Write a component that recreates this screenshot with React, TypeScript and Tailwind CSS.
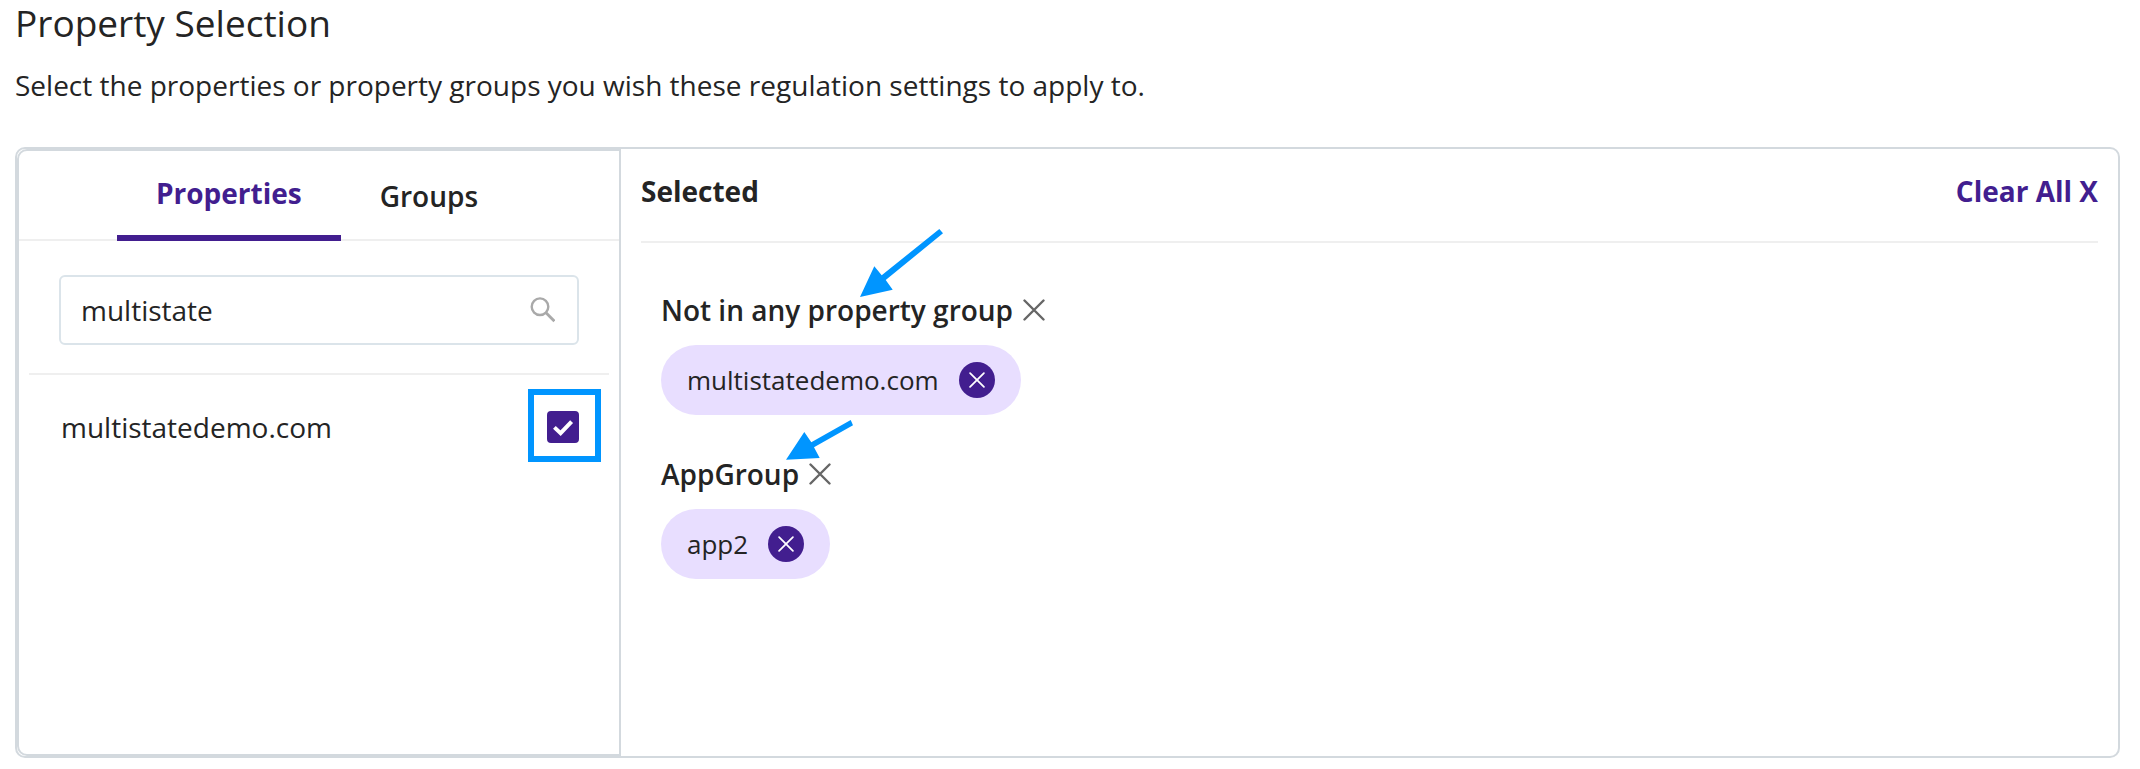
import React, { useState } from 'react';

interface SelectedGroup {
  name: string;
  items: string[];
  pointer: { className: string; viewBox: string; points: string };
}

const initialGroups: SelectedGroup[] = [
  {
    name: 'Not in any property group',
    items: ['multistatedemo.com'],
    pointer: {
      className: 'absolute left-[199px] -top-[61px] w-[83px] h-[68px] pointer-events-none',
      viewBox: '860 229 83 68',
      points: '860,297 874.3,266.3 881.7,275.3 939.3,229 943,233.3 885.7,280 892.7,289.7',
    },
  },
  {
    name: 'AppGroup',
    items: ['app2'],
    pointer: {
      className: 'absolute left-[125px] -top-[34px] w-[67px] h-[40px] pointer-events-none',
      viewBox: '786 420 67 40',
      points: '786,459.7 804.3,432 811.3,442.3 850.7,420 853,425.3 814,447.3 819.7,458',
    },
  },
];

const CrossIcon: React.FC<{ className: string }> = ({ className }) => (
  <svg className={className} viewBox="0 0 22 22" fill="none" stroke="currentColor" strokeWidth="2.4" strokeLinecap="round" aria-hidden="true">
    <path d="M1.5 1.5L20.5 20.5M20.5 1.5L1.5 20.5" />
  </svg>
);

const Chip: React.FC<{ label: string; onRemove: () => void }> = ({ label, onRemove }) => (
  <div className="flex items-center gap-5 h-[70px] px-[26px] rounded-full bg-[#e8deff] text-[26px]">
    <span>{label}</span>
    <button
      type="button"
      aria-label={`Remove ${label}`}
      onClick={onRemove}
      className="flex items-center justify-center size-9 rounded-full bg-[#421e8f] text-white"
    >
      <CrossIcon className="size-4" />
    </button>
  </div>
);

const App: React.FC = () => {
  const [tab, setTab] = useState('Properties');
  const [query, setQuery] = useState('multistate');
  const [checked, setChecked] = useState(true);
  const [groups, setGroups] = useState(initialGroups);

  const removeGroup = (name: string) => setGroups(groups.filter((g) => g.name !== name));

  return (
    <main className="min-h-screen flex flex-col pl-[15px] pr-5 pb-[11px] bg-white text-[#242424] text-[28px] font-['Open_Sans',sans-serif]">
      <h1 className="text-[37px] leading-[46px] font-medium">Property Selection</h1>
      <p className="mt-5 leading-[38px]">
        Select the properties or property groups you wish these regulation settings to apply to.
      </p>

      <div className="flex flex-1 mt-[43px] border-2 border-[#d3d9de] rounded-[10px]">
        {/* Search and pick */}
        <section className="w-[604px] shrink-0 border-2 border-[#d3d9de] rounded-l-[10px]">
          <div className="relative flex justify-center h-[90px] pr-1" role="tablist">
            <div className="absolute inset-x-0 bottom-0 h-[2px] bg-[#efefef]"></div>
            {['Properties', 'Groups'].map((name) => (
              <button
                key={name}
                type="button"
                role="tab"
                aria-selected={tab === name}
                onClick={() => setTab(name)}
                className={
                  tab === name
                    ? 'relative px-[39px] font-bold text-[#421e8f] border-b-6 border-[#421e8f]'
                    : 'relative px-[39px] font-semibold'
                }
              >
                {name}
              </button>
            ))}
          </div>

          <div className="mx-[10px] px-[30px] pt-[34px] pb-7 border-b-2 border-[#efefef]">
            <div className="flex items-center h-[70px] pl-5 pr-[22px] border-2 border-[#dbe4ea] rounded-md">
              <input
                type="text"
                aria-label="Search properties"
                value={query}
                onChange={(e) => setQuery(e.target.value)}
                className="flex-1 min-w-0 outline-none"
              />
              <svg className="size-[26px] text-[#a9a9a9]" viewBox="0 0 26 26" fill="none" stroke="currentColor" strokeWidth="2.4" aria-hidden="true">
                <circle cx="11" cy="9.7" r="8.3" />
                <path d="M17 15.8L25.4 24.2" strokeWidth="2.8" />
              </svg>
            </div>
          </div>

          <div className="flex items-center justify-between h-[104px] px-10">
            <label htmlFor="multistatedemo" className="pl-[2px]">multistatedemo.com</label>
            <div className="relative size-8">
              <input
                id="multistatedemo"
                type="checkbox"
                checked={checked}
                onChange={(e) => setChecked(e.target.checked)}
                className="peer block appearance-none size-8 rounded-[4px] border-2 border-[#421e8f] checked:bg-[#421e8f]"
              />
              <svg className="absolute inset-0 size-8 hidden peer-checked:block pointer-events-none" viewBox="0 0 32 32" fill="none" stroke="white" strokeWidth="4" aria-hidden="true">
                <path d="M7.4 16.4L13.6 22.2L24.6 10.6" />
              </svg>
              <div className="absolute -left-[19px] -top-[22px] size-[73px] border-6 border-[#0095ff] pointer-events-none"></div>
            </div>
          </div>
        </section>

        {/* Current selection */}
        <section className="flex-1 min-w-0 px-5">
          <div className="flex items-center justify-between h-[94px] pb-2 border-b-2 border-[#efefef] font-bold">
            <h2>Selected</h2>
            <button type="button" className="text-[#421e8f]" onClick={() => setGroups([])}>
              Clear All X
            </button>
          </div>

          <div className="flex flex-col gap-[39px] pl-5 pt-[47px]">
            {groups.map((group) => (
              <div key={group.name} className="relative">
                <div className="flex items-center gap-[10px]">
                  <h3 className="font-semibold leading-10">{group.name}</h3>
                  <button type="button" aria-label={`Remove ${group.name}`} onClick={() => removeGroup(group.name)}>
                    <CrossIcon className="size-[22px] text-[#666666]" />
                  </button>
                </div>
                <div className="flex mt-[15px]">
                  {group.items.map((item) => (
                    <Chip key={item} label={item} onRemove={() => removeGroup(group.name)} />
                  ))}
                </div>
                <svg className={group.pointer.className} viewBox={group.pointer.viewBox} fill="#0095ff" aria-hidden="true">
                  <polygon points={group.pointer.points} />
                </svg>
              </div>
            ))}
          </div>
        </section>
      </div>
    </main>
  );
};

export default App;
